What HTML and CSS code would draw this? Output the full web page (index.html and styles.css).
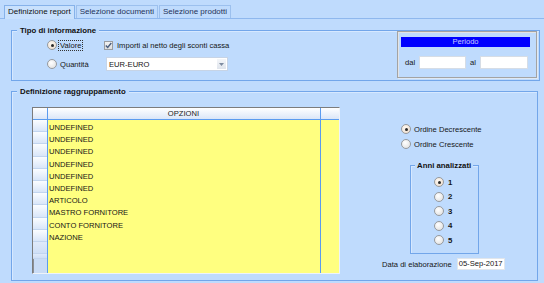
FILE: index.html
```html
<!DOCTYPE html>
<html lang="it">
<head>
    <meta charset="UTF-8">
    <title>Definizione report</title>
    <link rel="stylesheet" href="styles.css">
</head>
<body>

    <!-- Linguette -->
    <div class="tabs">
        <div class="tab active">Definizione report</div>
        <div class="tab">Selezione documenti</div>
        <div class="tab">Selezione prodotti</div>
    </div>

    <div class="content">
        <!-- Tipo di informazione -->
        <div class="group info">
            <span class="group-title">Tipo di informazione</span>
            <div class="info-left">
                <label class="opt"><span class="radio checked"></span><span class="focus">Valore</span></label>
                <label class="opt check-opt">
                    <span class="checkbox">
                        <svg width="9" height="9" viewBox="0 0 9 9"><path d="M1.8 4.4 L3.7 6.4 L7.3 2" fill="none" stroke="#4a5d7e" stroke-width="1.4"/></svg>
                    </span>
                    <span>Importi al netto degli sconti cassa</span>
                </label>
                <label class="opt"><span class="radio"></span><span>Quantità</span></label>
                <div class="combo">
                    <span>EUR-EURO</span>
                    <span class="combo-btn">
                        <svg width="5" height="3" viewBox="0 0 5 3"><path d="M0 0 H5 L2.5 3 Z" fill="#7d8ba0"/></svg>
                    </span>
                </div>
            </div>

            <div class="periodo">
                <div class="periodo-head">Periodo</div>
                <div class="periodo-row">
                    <span class="lbl-dal">dal</span>
                    <span class="field dal"></span>
                    <span class="lbl-al">al</span>
                    <span class="field al"></span>
                </div>
            </div>
        </div>

        <!-- Definizione raggruppamento -->
        <div class="group ragg">
            <span class="group-title">Definizione raggruppamento</span>

            <div class="grid">
                <div class="hcell corner"></div>
                <div class="hcell opz">OPZIONI</div>
                <div class="hcell last"></div>

                <div class="rowheads">
                    <div class="rh"></div><div class="rh"></div><div class="rh"></div>
                    <div class="rh"></div><div class="rh"></div><div class="rh"></div>
                    <div class="rh"></div><div class="rh"></div><div class="rh"></div>
                    <div class="rh"></div><div class="rh pale"></div><div class="rh pale short"></div>
                </div>
                <div class="rows">
                    <div class="row">UNDEFINED</div>
                    <div class="row">UNDEFINED</div>
                    <div class="row">UNDEFINED</div>
                    <div class="row">UNDEFINED</div>
                    <div class="row">UNDEFINED</div>
                    <div class="row">UNDEFINED</div>
                    <div class="row">ARTICOLO</div>
                    <div class="row">MASTRO FORNITORE</div>
                    <div class="row">CONTO FORNITORE</div>
                    <div class="row">NAZIONE</div>
                </div>
                <div class="filler"></div>
            </div>

            <div class="side">
                <label class="opt ordine"><span class="radio checked"></span><span>Ordine Decrescente</span></label>
                <label class="opt ordine"><span class="radio"></span><span>Ordine Crescente</span></label>

                <div class="group anni">
                    <span class="group-title">Anni analizzati</span>
                    <label class="opt anno"><span class="radio checked"></span><span>1</span></label>
                    <label class="opt anno"><span class="radio"></span><span>2</span></label>
                    <label class="opt anno"><span class="radio"></span><span>3</span></label>
                    <label class="opt anno"><span class="radio"></span><span>4</span></label>
                    <label class="opt anno"><span class="radio"></span><span>5</span></label>
                </div>

                <div class="data-row">
                    <span>Data di elaborazione</span>
                    <span class="field data">05-Sep-2017</span>
                </div>
            </div>
        </div>
    </div>

</body>
</html>
```

FILE: styles.css
```css
/* Generale */
body {
    margin: 0;
    width: 544px;
    height: 283px;
    overflow: hidden;
    background-color: #bfdbfd;
    font-family: "Liberation Sans", Arial, sans-serif;
    font-size: 7.6px;
    color: #151515;
}

/* Linguette */
.tabs {
    display: flex;
    align-items: flex-end;
    height: 18px;
    padding-left: 4px;
    border-bottom: 1px solid #8fb8ee;
}

.tab {
    height: 12px;
    line-height: 12px;
    padding: 0 3px;
    font-size: 8px;
    color: #1f3358;
    border: 1px solid #9cc0ee;
    border-bottom: none;
    margin-right: 1px;
}

.tab.active {
    height: 13px;
    color: #111;
    background-color: #c9e1fd;
    border-color: #86b2ea;
    margin-bottom: -1px;
}

.content {
    padding: 11px 4px 0 11px;
}

/* Riquadri */
.group {
    position: relative;
    border: 1px solid #72a6ea;
    box-shadow: inset 1px 1px 0 #d6e8ff;
}

.group-title {
    position: absolute;
    top: -5px;
    left: 5px;
    padding: 0 3px;
    line-height: 9px;
    font-weight: bold;
    font-size: 7.8px;
    color: #111;
    background-color: #bfdbfd;
}

/* Tipo di informazione */
.info {
    display: flex;
    height: 49px;
}

.info-left {
    display: grid;
    grid-template-columns: 57px auto;
    grid-template-rows: 12px 14px;
    row-gap: 6px;
    padding: 8px 0 0 35px;
    align-items: center;
}

.opt {
    display: flex;
    align-items: center;
    gap: 3px;
}

.radio {
    position: relative;
    width: 8px;
    height: 8px;
    border: 1px solid #979a9e;
    border-radius: 50%;
    background: radial-gradient(circle at 40% 35%, #ffffff, #dcdcdc);
    flex-shrink: 0;
}

.radio.checked {
    background: radial-gradient(circle at 40% 35%, #fffaf4, #e9d8c6);
}

.radio.checked::after {
    content: "";
    position: absolute;
    left: 2.5px;
    top: 2.5px;
    width: 3px;
    height: 3px;
    border-radius: 50%;
    background-color: #2a2a2a;
}

.focus {
    outline: 1px dotted #333;
    outline-offset: 0;
    padding: 0 1px;
    margin-left: -1px;
}

.check-opt {
    gap: 4px;
}

.checkbox {
    display: flex;
    width: 9px;
    height: 9px;
    border: 1px solid #9a9da2;
    background: linear-gradient(#f2f2f2, #dedede);
    box-sizing: border-box;
    align-items: center;
    justify-content: center;
}

.checkbox svg {
    flex-shrink: 0;
}

.combo {
    display: flex;
    align-items: center;
    justify-content: space-between;
    margin-left: 2px;
    width: 122px;
    height: 14px;
    box-sizing: border-box;
    padding-left: 2px;
    background-color: #fff;
    border: 1px solid #c7d4e6;
}

.combo-btn {
    display: flex;
    align-items: center;
    justify-content: center;
    width: 9px;
    height: 10px;
    margin-right: 1px;
    background: linear-gradient(#f4f6f9, #dfe4ec);
}

/* Periodo */
.periodo {
    margin-left: auto;
    margin-right: 2px;
    width: 140px;
    height: 47px;
    box-sizing: border-box;
    padding: 5px 6px 0 3px;
    border: 1px solid #a3a3a3;
    box-shadow: inset 1px 1px 0 #e4e4e4, 1px 1px 0 #dfe9f5;
}

.periodo-head {
    height: 10px;
    line-height: 10px;
    text-align: center;
    background-color: #0000ff;
    color: #c9c9ff;
}

.periodo-row {
    display: flex;
    align-items: center;
    margin-top: 9px;
    padding-left: 4px;
}

.field {
    display: block;
    height: 13px;
    box-sizing: border-box;
    background-color: #fff;
    border: 1px solid #d6dde6;
}

.lbl-dal {
    width: 14px;
}

.dal {
    width: 47px;
}

.lbl-al {
    margin-left: 4px;
    width: 10px;
}

.al {
    width: 48px;
}

/* Definizione raggruppamento */
.ragg {
    display: flex;
    margin-top: 10px;
    margin-right: 2px;
    height: 188px;
}

.grid {
    display: grid;
    grid-template-columns: 15px 273px 18px;
    grid-template-rows: 12px 153px;
    margin: 15px 0 0 20px;
    height: 165px;
    border-top: 1px solid #7c7c7c;
    border-left: 1px solid #7c7c7c;
    border-right: 1px solid #eef3fa;
    border-bottom: 1px solid #eef3fa;
}

.hcell {
    box-sizing: border-box;
    background: linear-gradient(#ffffff, #dae6f8);
    border-bottom: 1px solid #5b9bef;
    border-right: 1px solid #5b9bef;
    line-height: 11px;
}

.hcell.opz {
    text-align: right;
    padding-right: 121px;
    color: #222;
}

.hcell.last {
    border-right: none;
}

.rowheads {
    border-right: 1px solid #5b9bef;
    background-color: #c9dcf6;
    box-shadow: inset 1px 0 0 #8a8f96;
}

.rh {
    height: 12.2px;
    box-sizing: border-box;
    background: linear-gradient(#fbfdff, #d9e6f9);
    border-bottom: 1px solid #c2d5ef;
}

.rh.pale {
    background: linear-gradient(#dfeafb, #cfdff6);
}

.rh.short {
    height: 5px;
}

.rows {
    background-color: #ffff80;
    border-right: 1px solid #5b9bef;
    padding-top: 2px;
}

.row {
    height: 12.2px;
    line-height: 12.2px;
    padding-left: 1px;
}

.filler {
    background-color: #ffff80;
}

/* Colonna destra */
.side {
    display: flex;
    flex-direction: column;
    margin-left: 42px;
    padding-top: 31px;
}

.ordine {
    margin-left: 19px;
    height: 12px;
    margin-bottom: 3px;
}

.anni {
    display: flex;
    flex-direction: column;
    margin: 12px 0 0 28px;
    width: 69px;
    height: 89px;
    box-sizing: border-box;
    padding: 9px 0 0 23px;
}

.anni .group-title {
    left: 4px;
    padding: 0 2px;
}

.anno {
    height: 14.5px;
    font-weight: bold;
    font-size: 7.8px;
    gap: 4px;
}

.data-row {
    display: flex;
    align-items: center;
    gap: 5px;
    margin-top: 4px;
}

.data {
    width: 48px;
    height: 12px;
    line-height: 10px;
    padding-left: 1px;
    white-space: nowrap;
    overflow: hidden;
    border-color: #e1e6ec;
}
```
